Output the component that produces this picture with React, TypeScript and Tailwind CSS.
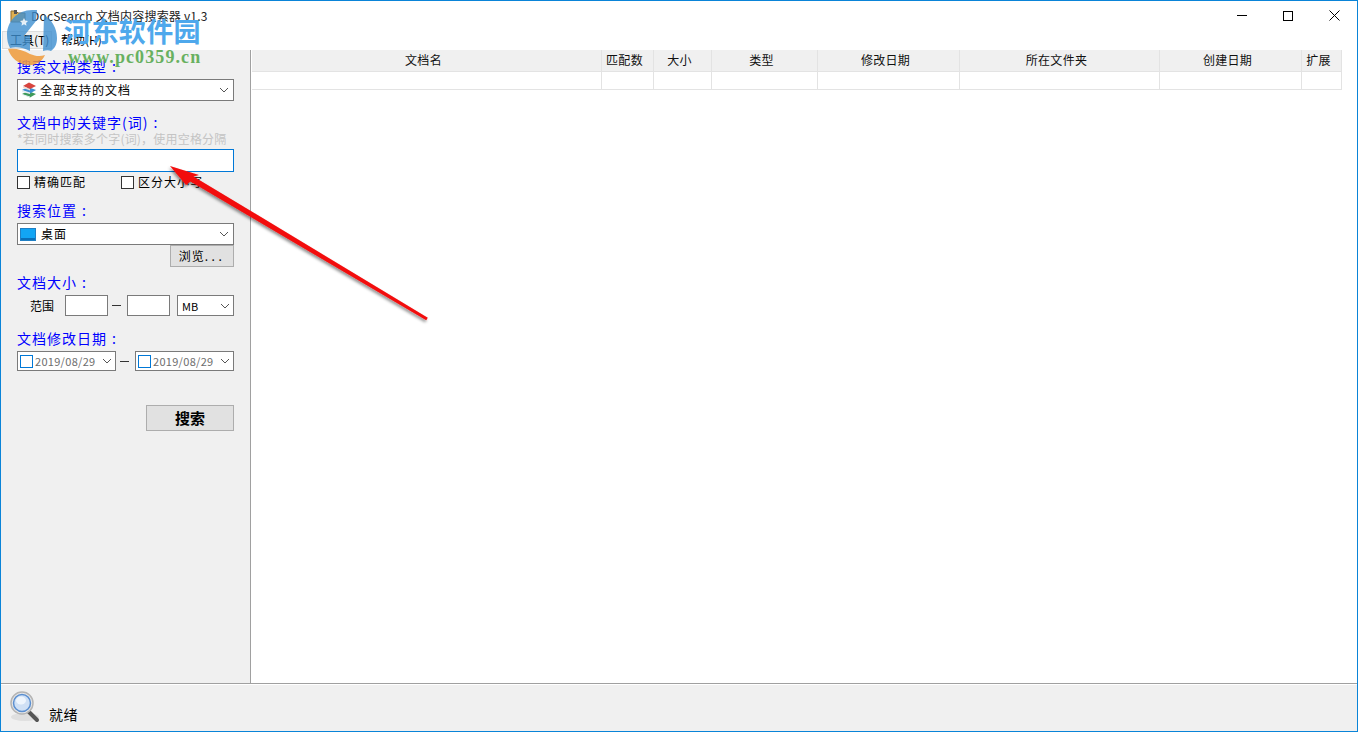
const cols = [
  { name: '文档名', w: 'w-[350px]' },
  { name: '匹配数', w: 'w-[52px]' },
  { name: '大小', w: 'w-[58px]' },
  { name: '类型', w: 'w-[106px]' },
  { name: '修改日期', w: 'w-[142px]' },
  { name: '所在文件夹', w: 'w-[200px]' },
  { name: '创建日期', w: 'w-[142px]' },
  { name: '扩展', w: 'w-[40px]' },
];

const font = { fontFamily: '"Noto Sans CJK SC", "Liberation Sans", sans-serif' };

function Chevron() {
  return (
    <svg width="10" height="6" viewBox="0 0 10 6" className="shrink-0">
      <path d="M1 1l4 4 4-4" fill="none" stroke="#555" strokeWidth="1" />
    </svg>
  );
}

function BooksIcon() {
  return (
    <svg width="16" height="16" viewBox="0 0 16 16" className="shrink-0">
      <path d="M1 12l6-3 8 3-6 3.5z" fill="#3f9a5a" />
      <path d="M1 12l8 2.5v1L1 13z" fill="#e8f0f0" />
      <path d="M1 8l6-3 8 3-6 3.5z" fill="#3f8fd0" />
      <path d="M1 8l8 2.5V12L1 10z" fill="#e8eef4" />
      <path d="M2 4l6-3.5 7 3.5-6 3z" fill="#d8453f" />
      <path d="M2 4l7 3v1.5L2 6z" fill="#f2dcd4" />
    </svg>
  );
}

function DesktopIcon() {
  return (
    <svg width="16" height="13" viewBox="0 0 16 13" className="shrink-0">
      <rect x="0.5" y="0.5" width="15" height="12" fill="#12a5f4" stroke="#1f7fc4" />
      <rect x="1" y="10" width="14" height="2" fill="#0b6fb8" />
    </svg>
  );
}

function Magnifier() {
  return (
    <svg width="32" height="34" viewBox="0 0 32 34">
      <ellipse cx="16" cy="27" rx="14" ry="4" fill="#000" opacity="0.07" />
      <path d="M19 21l9 9" stroke="#555" strokeWidth="4" strokeLinecap="round" />
      <circle cx="13" cy="13" r="11" fill="#e8e8e8" stroke="#b4b4b4" strokeWidth="1.5" />
      <circle cx="13" cy="13" r="8.5" fill="#cfe0f5" stroke="#5b8fd0" strokeWidth="1.5" />
      <ellipse cx="12" cy="10.5" rx="5" ry="4" fill="#eef5fd" />
    </svg>
  );
}

function Label({ text }: { text: string }) {
  return (
    <div className="h-[16px] text-[14px] leading-[14px] tracking-[1px] text-[#0000ff]">
      {text}
      <span className="ml-[5px]">:</span>
    </div>
  );
}

function DateBox({ value }: { value: string }) {
  return (
    <div className="flex h-[20px] w-[99px] items-center border border-[#7a7a7a] bg-white pl-[2px] pr-[3px]">
      <span className="h-[13px] w-[13px] shrink-0 border border-[#0078d7] bg-white" />
      <span className="ml-[2px] flex-1 text-[11px] leading-[18px] tracking-[0.3px] text-[#6d6d6d]">{value}</span>
      <Chevron />
    </div>
  );
}

export default function App() {
  return (
    <div style={font} className="relative flex h-[732px] w-[1358px] flex-col overflow-hidden border border-[#0a84d8] bg-white text-black">
      {/* Title bar */}
      <div className="flex h-[29px] items-center justify-between pl-[9px]">
        <div className="flex items-center gap-[5px]">
          <svg width="16" height="14" viewBox="0 0 16 14">
            <path d="M1 2h5l2 2h7v9H1z" fill="#e0b050" stroke="#8a6a30" />
            <rect x="4" y="1" width="3" height="4" fill="#555" />
          </svg>
          <span className="text-[12px] leading-[16px] tracking-[0.2px] text-[#222]">DocSearch 文档内容搜索器 v1.3</span>
        </div>
        <div className="flex">
          <div className="flex h-[29px] w-[46px] items-center justify-center">
            <span className="h-px w-[10px] bg-black" />
          </div>
          <div className="flex h-[29px] w-[46px] items-center justify-center">
            <span className="h-[10px] w-[10px] border border-black" />
          </div>
          <div className="flex h-[29px] w-[46px] items-center justify-center">
            <svg width="11" height="11" viewBox="0 0 11 11">
              <path d="M.5.5l10 10M10.5.5l-10 10" stroke="#000" strokeWidth="1" fill="none" />
            </svg>
          </div>
        </div>
      </div>

      {/* Menu */}
      <div className="flex h-[20px] items-center text-[12px]">
        <div className="ml-[1px] flex h-[18px] w-[50px] items-center border border-[#ddd] bg-[#f0f0f0] pl-[7px]">工具(T)</div>
        <div className="ml-[9px]">帮助(H)</div>
      </div>

      <div className="flex min-h-0 flex-1">
        {/* Left panel */}
        <div className="flex w-[250px] shrink-0 flex-col border-r border-[#a0a0a0] bg-[#f0f0f0] pl-[16px] pr-[16px] pt-[9px]">
          <Label text="搜索文档类型" />
          <div className="mt-[4px] flex h-[22px] items-center border border-[#7a7a7a] bg-white pl-[3px] pr-[4px]">
            <BooksIcon />
            <span className="ml-[3px] flex-1 text-[12px] tracking-[1px]">全部支持的文档</span>
            <Chevron />
          </div>

          <div className="mt-[14px]"><Label text="文档中的关键字(词)" /></div>
          <div className="whitespace-nowrap text-[12px] leading-[16px] tracking-[0.2px] text-[#c4c4c4]">{'*若同时搜索多个字(词)\uFF0C使用空格分隔'}</div>
          <div className="mt-[2px] h-[23px] border border-[#0078d7] bg-white" />
          <div className="mt-[3px] flex h-[14px] items-center text-[12px] tracking-[1px]">
            <span className="h-[13px] w-[13px] border border-[#333] bg-white" />
            <span className="ml-[4px] w-[87px]">精确匹配</span>
            <span className="h-[13px] w-[13px] border border-[#333] bg-white" />
            <span className="ml-[4px]">区分大小写</span>
          </div>

          <div className="mt-[14px]"><Label text="搜索位置" /></div>
          <div className="mt-[4px] flex h-[22px] items-center border border-[#7a7a7a] bg-white pl-[2px] pr-[4px]">
            <DesktopIcon />
            <span className="ml-[5px] flex-1 text-[12px] tracking-[1px]">桌面</span>
            <Chevron />
          </div>
          <div className="flex justify-end">
            <div className="flex h-[22px] w-[64px] items-center justify-center border border-[#adadad] bg-[#e1e1e1] text-[12px] tracking-[1px]">
              浏览<span className="tracking-[3.5px]">...</span>
            </div>
          </div>

          <div className="mt-[8px]"><Label text="文档大小" /></div>
          <div className="mt-[4px] flex h-[21px] items-center text-[12px]">
            <span className="ml-[13px] w-[35px]">范围</span>
            <span className="h-[21px] w-[43px] border border-[#7a7a7a] bg-white" />
            <span className="ml-[4px] mr-[6px] h-px w-[9px] bg-[#333]" />
            <span className="h-[21px] w-[43px] border border-[#7a7a7a] bg-white" />
            <div className="ml-[7px] flex h-[21px] w-[57px] items-center border border-[#7a7a7a] bg-white pl-[4px] pr-[3px]">
              <span className="flex-1 text-[11px] leading-[18px]">MB</span>
              <Chevron />
            </div>
          </div>

          <div className="mt-[15px]"><Label text="文档修改日期" /></div>
          <div className="mt-[4px] flex items-center">
            <DateBox value="2019/08/29" />
            <span className="ml-[4px] mr-[6px] h-px w-[9px] bg-[#333]" />
            <DateBox value="2019/08/29" />
          </div>

          <div className="mt-[34px] flex justify-end">
            <div className="flex h-[26px] w-[88px] items-center justify-center border border-[#adadad] bg-[#e1e1e1] text-[15px] font-bold">搜索</div>
          </div>
        </div>

        {/* Results table */}
        <div className="min-w-0 flex-1 bg-white pl-px">
          <div className="flex h-[22px] w-[1090px] bg-[#f0f0f0]">
            {cols.map((c) => (
              <div key={c.name} className={`${c.w} flex shrink-0 items-center justify-center border-b border-r border-[#e3e3e3] pb-[2px] pr-[6px] text-[12px] tracking-[0.3px] text-[#111]`}>
                {c.name}
              </div>
            ))}
          </div>
          <div className="flex h-[18px] w-[1090px]">
            {cols.map((c) => (
              <div key={c.name} className={`${c.w} shrink-0 border-b border-r border-[#e3e3e3]`} />
            ))}
          </div>
        </div>
      </div>

      {/* Status bar */}
      <div className="flex h-[48px] items-start border-t border-[#a0a0a0] bg-[#f0f0f0] pl-[8px] shadow-[inset_0_1px_0_#fff]">
        <div className="mt-[6px]"><Magnifier /></div>
        <span className="ml-[8px] mt-[21px] text-[14px] leading-[18px] tracking-[0.5px]">就绪</span>
      </div>

      {/* Watermark */}
      <div className="pointer-events-none absolute left-[-1px] top-[-1px]">
        <svg width="64" height="70" viewBox="0 0 64 70" className="absolute left-0 top-0">
          <path d="M34 10C18 9 7 21 7 35c0 5 1 9 3 13 7-2 14 0 20 3V35l-6 1 12-15 1-11z" fill="#3d8fd0" opacity="0.8" />
          <path d="M44 15c8 5 13 13 13 23 0 6-2 10-6 13-2-1-5-1-8 0z" fill="#3d8fd0" opacity="0.8" />
          <path d="M24 18l1.2 2.600 2.800.3-2 2 .5 2.800-2.500-1.400-2.500 1.400.5-2.800-2-2 2.800-.3z" fill="#fff" opacity="0.85" />
          <path d="M8 49c8-1 15 1 22 5 5 2 10 3 15 1-3 7-10 11-18 10C18 64 11 58 8 49z" fill="#ef9a3a" opacity="0.85" />
        </svg>
        <div className="absolute left-[64px] top-[12px] whitespace-nowrap text-[27px] font-bold leading-[38px] tracking-[0.4px] text-[#4ea8ec]">河东软件园</div>
        <div className="absolute left-[68px] top-[47px] whitespace-nowrap text-[18px] font-bold leading-[20px] tracking-[1.1px] text-[#68b060]" style={{ fontFamily: '"Liberation Serif", serif' }}>www.pc0359.cn</div>
      </div>

      {/* Annotation arrow */}
      <svg width="280" height="175" viewBox="0 0 280 175" className="pointer-events-none absolute left-[159px] top-[154px]">
        <defs>
          <filter id="arrowShadow" x="-10%" y="-10%" width="120%" height="120%">
            <feDropShadow dx="-1" dy="2" stdDeviation="1.5" floodColor="#000" floodOpacity="0.45" />
          </filter>
        </defs>
        <path d="M10 11L39 20 33.500 21.400 267.800 162.700 266.200 165.300 30.500 26.600 26 30z" fill="#f20a0a" filter="url(#arrowShadow)" />
      </svg>
    </div>
  );
}
